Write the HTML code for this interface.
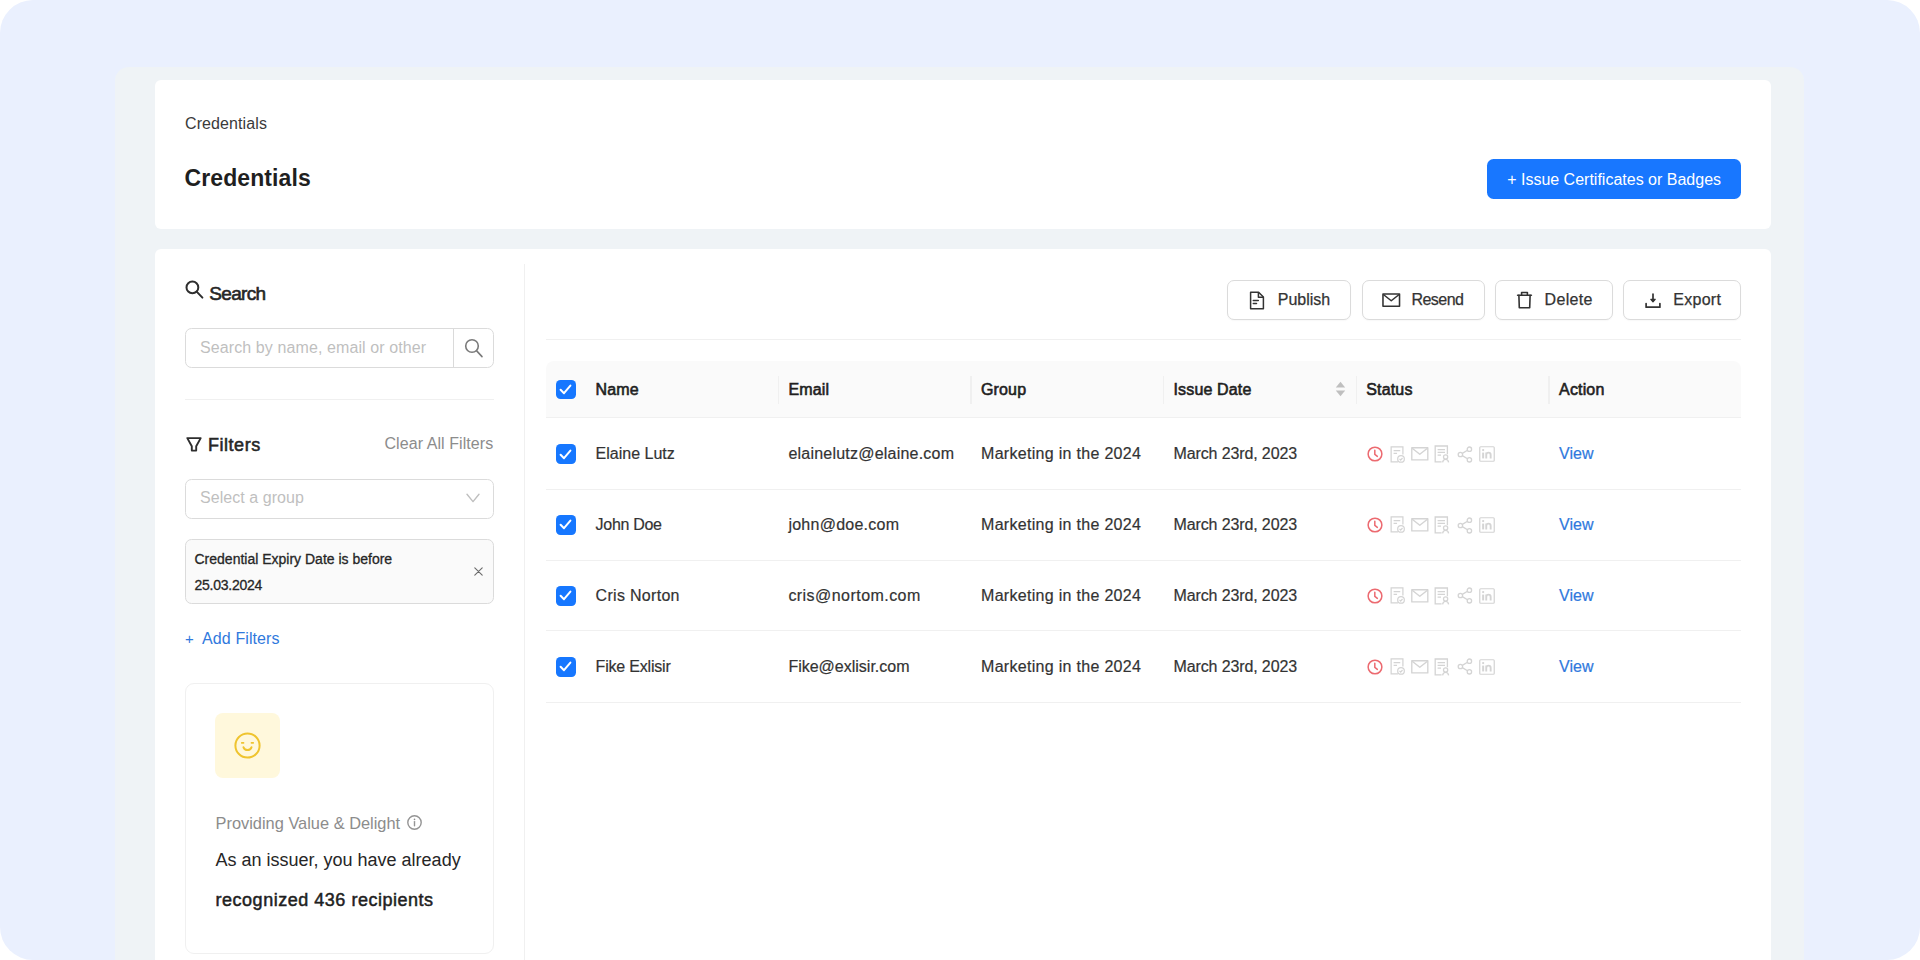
<!DOCTYPE html>
<html lang="en">
<head>
<meta charset="utf-8">
<title>Credentials</title>
<style>
*{box-sizing:border-box;margin:0;padding:0}
html,body{width:1920px;height:960px;overflow:hidden;background:#fff}
body{font-family:"Liberation Sans",Arial,sans-serif;font-size:16px;color:#262626;position:relative}
.abs{position:absolute}
.stage{position:absolute;left:0;top:0;width:1920px;height:960px;background:#eaf0fe;border-radius:33px;overflow:hidden}
.panel{position:absolute;left:115.300px;top:66.5px;width:1688.500px;height:920px;background:#eff3f6;border-radius:14px}
.card{position:absolute;background:#fff;border-radius:6px}
.t{position:absolute;white-space:nowrap;line-height:1}
.btn{position:absolute;top:31.600px;height:40.200px;border:1.3px solid #dbdbdb;border-radius:7px;background:#fff;box-shadow:0 1px 1.5px rgba(0,0,0,.03)}
.btn .t{top:11.2px;font-size:16px;color:#333;-webkit-text-stroke:0.25px #333}
.th{position:absolute;top:0;height:57.8px}
.th .t{top:21.300px;font-size:16px;color:#1f1f1f;-webkit-text-stroke:0.6px #1f1f1f;letter-spacing:0.15px}
.sep{position:absolute;top:15.5px;width:1.3px;height:28px;background:#f0f0f0}
.row{position:absolute;left:391.5px;width:1195px;height:70.7px;border-bottom:1.3px solid #f0f0f0}
.row .t{top:26.900px;font-size:16px;color:#333;-webkit-text-stroke:0.2px #333}
.row a.t{-webkit-text-stroke:0.2px #3079dd}
.cb{position:absolute;left:9.700px;width:19.900px;height:19.900px;border-radius:4.5px;background:#1677ff}
.cb svg{left:3.600px;top:4.400px}
.row a.t{color:#3079dd;text-decoration:none}
.st{position:absolute;left:820.5px;top:26px;width:132px;height:18px}
svg{display:block;position:absolute;overflow:visible}
</style>
</head>
<body>
<div class="stage">
 <div class="panel"></div>

 <!-- page header card -->
 <div class="card" id="hdr" style="left:154.5px;top:80px;width:1616.400px;height:149.3px">
  <div class="t" id="crumb" style="left:30.5px;top:36px;font-size:16px;color:#3a3a3a;letter-spacing:0.1px">Credentials</div>
  <h1 class="t" id="title" style="left:30px;top:87.400px;font-size:23px;font-weight:700;color:#1f1f1f;letter-spacing:0.1px">Credentials</h1>
  <div class="abs" id="issue" style="left:1332.300px;top:78.800px;width:254.600px;height:40.100px;background:#1877ff;border-radius:6.5px;color:#fff;font-size:16px;line-height:42.300px;text-align:center;white-space:nowrap">+ Issue Certificates or Badges</div>
 </div>

 <!-- main card -->
 <div class="card" id="main" style="left:154.5px;top:248.5px;width:1616.400px;height:740px">
  <!-- ===== sidebar ===== -->
  <div class="abs" style="left:369.5px;top:15.5px;width:1.3px;height:730px;background:#f0f0f0"></div>

  <svg id="ic-search-h" style="left:30.100px;top:31.100px" width="19" height="19" viewBox="0 0 19 19" fill="none" stroke="#2e2e2e" stroke-width="2" stroke-linecap="round"><circle cx="7.4" cy="7.4" r="5.9"/><path d="M11.9 11.9 17.4 17.6"/></svg>
  <div class="t" id="search-h" style="left:54.800px;top:35px;font-size:19px;color:#262626;-webkit-text-stroke:0.6px #262626;letter-spacing:-0.700px">Search</div>

  <div class="abs" id="search-box" style="left:30.5px;top:79.5px;width:309px;height:40px;border:1.3px solid #dbdbdb;border-radius:6.5px;background:#fff">
    <div class="t" style="left:14px;top:10.5px;font-size:16px;color:#bfbfbf;letter-spacing:0.1px">Search by name, email or other</div>
    <div class="abs" style="left:267.200px;top:-0.500px;width:1.300px;height:38.500px;background:#dadada"></div>
    <svg style="left:278px;top:8.5px" width="20" height="20" viewBox="0 0 20 20" fill="none" stroke="#7a7a7a" stroke-width="1.600" stroke-linecap="round"><circle cx="8" cy="8" r="6.3"/><path d="M12.7 12.9 18 18.6"/></svg>
  </div>

  <div class="abs" style="left:30.5px;top:150.3px;width:309px;height:1.3px;background:#f0f0f0"></div>

  <svg id="ic-filter" style="left:31px;top:188px" width="16" height="15" viewBox="0 0 16 15" fill="none" stroke="#2e2e2e" stroke-width="1.900" stroke-linejoin="round"><path d="M1.300 1.100h13.400L10.200 9.200v4.400H5.800V9.200z"/></svg>
  <div class="t" id="filters-h" style="left:53.400px;top:187.100px;font-size:18px;color:#262626;-webkit-text-stroke:0.55px #262626;letter-spacing:0.55px">Filters</div>
  <div class="t" id="clear" style="left:230px;top:187.700px;font-size:16px;color:#8c8c8c;letter-spacing:0.07px">Clear All Filters</div>

  <div class="abs" id="select" style="left:30.5px;top:230.3px;width:309px;height:40px;border:1.3px solid #dbdbdb;border-radius:6.5px;background:#fff">
    <div class="t" style="left:14px;top:10.5px;font-size:16px;color:#bfbfbf;letter-spacing:0.05px">Select a group</div>
    <svg style="left:279.600px;top:13.600px" width="14" height="10" viewBox="0 0 14 10" fill="none" stroke="#bfbfbf" stroke-width="1.4" stroke-linecap="round" stroke-linejoin="round"><path d="M1 1.2 7 8.6 13 1.2"/></svg>
  </div>

  <div class="abs" id="chip" style="left:30.5px;top:290.7px;width:309px;height:65px;border:1.3px solid #dbdbdb;border-radius:6.5px;background:#fafafa">
    <div class="t" style="left:8.5px;top:12px;font-size:14px;color:#262626;-webkit-text-stroke:0.3px #262626">Credential Expiry Date is before</div>
    <div class="t" style="left:8.5px;top:37.5px;font-size:14px;color:#262626;-webkit-text-stroke:0.3px #262626;letter-spacing:-0.25px">25.03.2024</div>
    <svg style="left:287.5px;top:27px" width="9" height="9" viewBox="0 0 9 9" fill="none" stroke="#6a6a6a" stroke-width="1.100" stroke-linecap="round"><path d="M.8.8 8.2 8.2M8.2.8.8 8.2"/></svg>
  </div>

  <div class="t" id="addf" style="left:30.500px;top:382.500px;font-size:16px;color:#3079dd;letter-spacing:0.1px"><span style="font-size:15px">+</span>&nbsp; Add Filters</div>

  <div class="abs" id="stat" style="left:30.5px;top:434.8px;width:309px;height:270.5px;border:1.3px solid #f0f0f0;border-radius:9px;background:#fff">
    <div class="abs" style="left:29px;top:28.5px;width:64.500px;height:65px;border-radius:8px;background:#fff8dc"></div>
    <svg style="left:47.500px;top:47.900px" width="27" height="27" viewBox="0 0 27 27" fill="none" stroke="#efc42f" stroke-width="2" stroke-linecap="round"><circle cx="13.5" cy="13.5" r="12.100"/><path d="M9.500 15.300a4.300 4.300 0 0 0 8 0"/><path d="M7.700 10.900h1.900M17.400 10.900h1.900" stroke-width="1.600"/></svg>
    <div class="t" style="left:29.500px;top:130.600px;font-size:16.4px;color:#8c8c8c">Providing Value &amp; Delight</div>
    <svg style="left:221px;top:131px" width="15" height="15" viewBox="0 0 15 15" fill="none" stroke="#949494" stroke-width="1.400"><circle cx="7.5" cy="7.5" r="6.7"/><path d="M7.5 6.6v4.2" stroke-linecap="round"/><circle cx="7.5" cy="4.4" r=".8" fill="#8c8c8c" stroke="none"/></svg>
    <div class="t" style="left:29.500px;top:166.300px;font-size:18px;color:#262626">As an issuer, you have already</div>
    <div class="t" style="left:29.500px;top:207.200px;font-size:18px;color:#1f1f1f;-webkit-text-stroke:0.5px #1f1f1f;letter-spacing:0.52px">recognized 436 recipients</div>
  </div>

  <!-- ===== content ===== -->
  
  <div class="btn" id="b-pub" style="left:1072.900px;width:123.400px">
    <svg style="left:20.800px;top:9.500px" width="16" height="19" viewBox="0 0 16 19" fill="none" stroke="#333" stroke-width="1.5" stroke-linejoin="round"><path d="M1.6 1.2h8l4.8 4.8v11.8H1.6z"/><path d="M9.4 1.4v4.8h4.8"/><path d="M4.3 9.6h5M4.3 12.6h3.2" stroke-linecap="round"/></svg>
    <div class="t" style="left:49.4px">Publish</div>
  </div>
  <div class="btn" id="b-res" style="left:1207px;width:123px">
    <svg style="left:19.500px;top:11.800px" width="18.500" height="14.200" viewBox="0 0 19 15" preserveAspectRatio="none" fill="none" stroke="#333" stroke-width="1.6" stroke-linejoin="round"><rect x="1" y="1" width="17" height="13"/><path d="M1.4 1.6 9.5 8.2 17.6 1.6"/></svg>
    <div class="t" style="left:49.0px;letter-spacing:-0.55px">Resend</div>
  </div>
  <div class="btn" id="b-del" style="left:1340.3px;width:117.9px">
    <svg style="left:20.2px;top:10.3px" width="17" height="18" viewBox="0 0 17 18" fill="none" stroke="#333" stroke-width="1.6" stroke-linejoin="round" stroke-linecap="round"><path d="M1.600 4.200h13.800"/><path d="M5.600 4V1.500h5.800V4"/><path d="M2.900 4.400 3.300 16.800h10.400L14.100 4.400"/></svg>
    <div class="t" style="left:48.7px;letter-spacing:0.35px">Delete</div>
  </div>
  <div class="btn" id="b-exp" style="left:1468.6px;width:117.7px">
    <svg style="left:20.600px;top:11.600px" width="16" height="15.500" viewBox="0 0 16 15.5" fill="none" stroke="#333" stroke-width="1.700" stroke-linecap="round" stroke-linejoin="round"><path d="M8 1v6.800"/><path d="M5.800 6.300 8 8.800l2.200-2.500z" fill="#333" stroke-width="1.200"/><path d="M1.100 10.600v3.600h13.800v-3.600"/></svg>
    <div class="t" style="left:49.1px;letter-spacing:0.3px">Export</div>
  </div>
  <div class="abs" style="left:391.5px;top:90.7px;width:1195px;height:1.3px;background:#f0f0f0"></div>
  <div class="abs" id="thead" style="left:391.5px;top:112.1px;width:1195px;height:57.8px;background:#fafafa;border-radius:8px 8px 0 0;border-bottom:1.3px solid #f0f0f0">
    <div class="cb" style="top:19px"><svg width="13" height="11" viewBox="0 0 13 11" fill="none" stroke="#fff" stroke-width="2" stroke-linecap="round" stroke-linejoin="round"><path d="M1.600 5.800 5 9.200 11.400 1.600"/></svg></div>
    <div class="t" style="left:49.6px;top:21.300px;font-size:16px;color:#1f1f1f;-webkit-text-stroke:0.6px #1f1f1f;letter-spacing:0.15px">Name</div>
    <div class="t" style="left:242.4px;top:21.300px;font-size:16px;color:#1f1f1f;-webkit-text-stroke:0.6px #1f1f1f;letter-spacing:0.15px">Email</div>
    <div class="t" style="left:435px;top:21.300px;font-size:16px;color:#1f1f1f;-webkit-text-stroke:0.6px #1f1f1f;letter-spacing:0.15px">Group</div>
    <div class="t" style="left:627.5px;top:21.300px;font-size:16px;color:#1f1f1f;-webkit-text-stroke:0.6px #1f1f1f;letter-spacing:0.15px">Issue Date</div>
    <div class="t" style="left:820.3px;top:21.300px;font-size:16px;color:#1f1f1f;-webkit-text-stroke:0.6px #1f1f1f;letter-spacing:0.15px">Status</div>
    <div class="t" style="left:1013.1px;top:21.300px;font-size:16px;color:#1f1f1f;-webkit-text-stroke:0.6px #1f1f1f;letter-spacing:0.15px">Action</div>
    <div class="sep" style="left:231.8px"></div>
    <div class="sep" style="left:424.4px"></div>
    <div class="sep" style="left:617.0px"></div>
    <div class="sep" style="left:809.6px"></div>
    <div class="sep" style="left:1002.3px"></div>
    <svg style="left:789.300px;top:20.700px" width="11" height="16" viewBox="0 0 10 15"><path d="M5 0.6 9.4 6H.6z" fill="#bfbfbf"/><path d="M5 14.4.6 9h8.8z" fill="#bfbfbf"/></svg>
  </div>
  <div class="row" style="top:170.9px">
    <div class="cb" style="top:25px"><svg width="13" height="11" viewBox="0 0 13 11" fill="none" stroke="#fff" stroke-width="2" stroke-linecap="round" stroke-linejoin="round"><path d="M1.600 5.800 5 9.200 11.400 1.600"/></svg></div>
    <div class="t" style="left:49.6px;letter-spacing:0.0px">Elaine Lutz</div>
    <div class="t" style="left:242.4px;letter-spacing:0.22px">elainelutz@elaine.com</div>
    <div class="t" style="left:435px;letter-spacing:0.3px">Marketing in the 2024</div>
    <div class="t" style="left:627.5px;letter-spacing:-0.12px">March 23rd, 2023</div>
    <div class="st">
      <svg style="left:0.300px;top:0.800px" width="16" height="16" viewBox="0 0 17 17" fill="none" stroke="#ec6a70" stroke-width="1.600" stroke-linecap="round"><circle cx="8.5" cy="8.5" r="7.3"/><path d="M8.3 4.4v4.4l2.7 2.2"/></svg>
      <svg style="left:23px;top:0.300px" width="15.200" height="17.100" viewBox="0 0 16 18" fill="none" stroke="#d4d4d4" stroke-width="1.3"><path d="M8.4 16.8H1.2V1h12.4v8"/><path d="M3.8 4.8h7M3.8 7.8h3.6"/><circle cx="11.6" cy="13.6" r="3.5"/><path d="M10 13.6l1.2 1.2 2-2.2"/></svg>
      <svg style="left:44.500px;top:2px" width="17.600" height="13.800" viewBox="0 0 18 15" preserveAspectRatio="none" fill="none" stroke="#d4d4d4" stroke-width="1.4" stroke-linejoin="round"><rect x=".8" y=".8" width="16.4" height="13.2"/><path d="M1.2 1.4 9 8 16.8 1.4"/></svg>
      <svg style="left:67.5px;top:0" width="16" height="18" viewBox="0 0 16 18" fill="none" stroke="#d4d4d4" stroke-width="1.3"><path d="M7.6 16.8H1.2V1h12.2v8.2"/><path d="M3.6 4.6h7.4M3.6 7.4h7.4M3.6 10.2h3.4"/><circle cx="11.6" cy="12" r="2.1"/><path d="M8.6 17.4c.3-2 1.4-3 3-3s2.700 1 3 3"/></svg>
      <svg style="left:90.6px;top:0.6px" width="16" height="17" viewBox="0 0 16 17" fill="none" stroke="#d4d4d4" stroke-width="1.3"><circle cx="12.4" cy="3.2" r="2.2"/><circle cx="3.4" cy="8.5" r="2.2"/><circle cx="12.4" cy="13.8" r="2.2"/><path d="M5.300 7.400 10.500 4.300M5.300 9.600 10.500 12.700"/></svg>
      <svg style="left:112.600px;top:1px" width="16" height="16" viewBox="0 0 17 17" fill="none" stroke="#d4d4d4" stroke-width="1.3"><rect x=".8" y=".8" width="15.4" height="15.400" rx="1"/><path d="M4.400 7v6.200" stroke-width="2.100"/><circle cx="4.400" cy="4.300" r="1.200" fill="#d4d4d4" stroke="none"/><path d="M7.700 13.200V7M7.700 9.600c0-1.600 1-2.500 2.400-2.500s2.300.9 2.300 2.500v3.600" stroke-width="2"/></svg>
    </div>
    <a class="t" style="left:1013.1px">View</a>
  </div>
  <div class="row" style="top:241.6px">
    <div class="cb" style="top:25px"><svg width="13" height="11" viewBox="0 0 13 11" fill="none" stroke="#fff" stroke-width="2" stroke-linecap="round" stroke-linejoin="round"><path d="M1.600 5.800 5 9.200 11.400 1.600"/></svg></div>
    <div class="t" style="left:49.6px;letter-spacing:-0.3px">John Doe</div>
    <div class="t" style="left:242.4px;letter-spacing:0.25px">john@doe.com</div>
    <div class="t" style="left:435px;letter-spacing:0.3px">Marketing in the 2024</div>
    <div class="t" style="left:627.5px;letter-spacing:-0.12px">March 23rd, 2023</div>
    <div class="st">
      <svg style="left:0.300px;top:0.800px" width="16" height="16" viewBox="0 0 17 17" fill="none" stroke="#ec6a70" stroke-width="1.600" stroke-linecap="round"><circle cx="8.5" cy="8.5" r="7.3"/><path d="M8.3 4.4v4.4l2.7 2.2"/></svg>
      <svg style="left:23px;top:0.300px" width="15.200" height="17.100" viewBox="0 0 16 18" fill="none" stroke="#d4d4d4" stroke-width="1.3"><path d="M8.4 16.8H1.2V1h12.4v8"/><path d="M3.8 4.8h7M3.8 7.8h3.6"/><circle cx="11.6" cy="13.6" r="3.5"/><path d="M10 13.6l1.2 1.2 2-2.2"/></svg>
      <svg style="left:44.500px;top:2px" width="17.600" height="13.800" viewBox="0 0 18 15" preserveAspectRatio="none" fill="none" stroke="#d4d4d4" stroke-width="1.4" stroke-linejoin="round"><rect x=".8" y=".8" width="16.4" height="13.2"/><path d="M1.2 1.4 9 8 16.8 1.4"/></svg>
      <svg style="left:67.5px;top:0" width="16" height="18" viewBox="0 0 16 18" fill="none" stroke="#d4d4d4" stroke-width="1.3"><path d="M7.6 16.8H1.2V1h12.2v8.2"/><path d="M3.6 4.6h7.4M3.6 7.4h7.4M3.6 10.2h3.4"/><circle cx="11.6" cy="12" r="2.1"/><path d="M8.6 17.4c.3-2 1.4-3 3-3s2.700 1 3 3"/></svg>
      <svg style="left:90.6px;top:0.6px" width="16" height="17" viewBox="0 0 16 17" fill="none" stroke="#d4d4d4" stroke-width="1.3"><circle cx="12.4" cy="3.2" r="2.2"/><circle cx="3.4" cy="8.5" r="2.2"/><circle cx="12.4" cy="13.8" r="2.2"/><path d="M5.300 7.400 10.500 4.300M5.300 9.600 10.500 12.700"/></svg>
      <svg style="left:112.600px;top:1px" width="16" height="16" viewBox="0 0 17 17" fill="none" stroke="#d4d4d4" stroke-width="1.3"><rect x=".8" y=".8" width="15.4" height="15.400" rx="1"/><path d="M4.400 7v6.200" stroke-width="2.100"/><circle cx="4.400" cy="4.300" r="1.200" fill="#d4d4d4" stroke="none"/><path d="M7.700 13.200V7M7.700 9.600c0-1.600 1-2.500 2.400-2.500s2.300.9 2.300 2.500v3.600" stroke-width="2"/></svg>
    </div>
    <a class="t" style="left:1013.1px">View</a>
  </div>
  <div class="row" style="top:312.3px">
    <div class="cb" style="top:25px"><svg width="13" height="11" viewBox="0 0 13 11" fill="none" stroke="#fff" stroke-width="2" stroke-linecap="round" stroke-linejoin="round"><path d="M1.600 5.800 5 9.200 11.400 1.600"/></svg></div>
    <div class="t" style="left:49.6px;letter-spacing:0.3px">Cris Norton</div>
    <div class="t" style="left:242.4px;letter-spacing:0.45px">cris@nortom.com</div>
    <div class="t" style="left:435px;letter-spacing:0.3px">Marketing in the 2024</div>
    <div class="t" style="left:627.5px;letter-spacing:-0.12px">March 23rd, 2023</div>
    <div class="st">
      <svg style="left:0.300px;top:0.800px" width="16" height="16" viewBox="0 0 17 17" fill="none" stroke="#ec6a70" stroke-width="1.600" stroke-linecap="round"><circle cx="8.5" cy="8.5" r="7.3"/><path d="M8.3 4.4v4.4l2.7 2.2"/></svg>
      <svg style="left:23px;top:0.300px" width="15.200" height="17.100" viewBox="0 0 16 18" fill="none" stroke="#d4d4d4" stroke-width="1.3"><path d="M8.4 16.8H1.2V1h12.4v8"/><path d="M3.8 4.8h7M3.8 7.8h3.6"/><circle cx="11.6" cy="13.6" r="3.5"/><path d="M10 13.6l1.2 1.2 2-2.2"/></svg>
      <svg style="left:44.500px;top:2px" width="17.600" height="13.800" viewBox="0 0 18 15" preserveAspectRatio="none" fill="none" stroke="#d4d4d4" stroke-width="1.4" stroke-linejoin="round"><rect x=".8" y=".8" width="16.4" height="13.2"/><path d="M1.2 1.4 9 8 16.8 1.4"/></svg>
      <svg style="left:67.5px;top:0" width="16" height="18" viewBox="0 0 16 18" fill="none" stroke="#d4d4d4" stroke-width="1.3"><path d="M7.6 16.8H1.2V1h12.2v8.2"/><path d="M3.6 4.6h7.4M3.6 7.4h7.4M3.6 10.2h3.4"/><circle cx="11.6" cy="12" r="2.1"/><path d="M8.6 17.4c.3-2 1.4-3 3-3s2.700 1 3 3"/></svg>
      <svg style="left:90.6px;top:0.6px" width="16" height="17" viewBox="0 0 16 17" fill="none" stroke="#d4d4d4" stroke-width="1.3"><circle cx="12.4" cy="3.2" r="2.2"/><circle cx="3.4" cy="8.5" r="2.2"/><circle cx="12.4" cy="13.8" r="2.2"/><path d="M5.300 7.400 10.500 4.300M5.300 9.600 10.500 12.700"/></svg>
      <svg style="left:112.600px;top:1px" width="16" height="16" viewBox="0 0 17 17" fill="none" stroke="#d4d4d4" stroke-width="1.3"><rect x=".8" y=".8" width="15.4" height="15.400" rx="1"/><path d="M4.400 7v6.200" stroke-width="2.100"/><circle cx="4.400" cy="4.300" r="1.200" fill="#d4d4d4" stroke="none"/><path d="M7.700 13.200V7M7.700 9.600c0-1.600 1-2.500 2.400-2.500s2.300.9 2.300 2.500v3.600" stroke-width="2"/></svg>
    </div>
    <a class="t" style="left:1013.1px">View</a>
  </div>
  <div class="row" style="top:383.400px">
    <div class="cb" style="top:25px"><svg width="13" height="11" viewBox="0 0 13 11" fill="none" stroke="#fff" stroke-width="2" stroke-linecap="round" stroke-linejoin="round"><path d="M1.600 5.800 5 9.200 11.400 1.600"/></svg></div>
    <div class="t" style="left:49.6px;letter-spacing:-0.2px">Fike Exlisir</div>
    <div class="t" style="left:242.4px;letter-spacing:0px">Fike@exlisir.com</div>
    <div class="t" style="left:435px;letter-spacing:0.3px">Marketing in the 2024</div>
    <div class="t" style="left:627.5px;letter-spacing:-0.12px">March 23rd, 2023</div>
    <div class="st">
      <svg style="left:0.300px;top:0.800px" width="16" height="16" viewBox="0 0 17 17" fill="none" stroke="#ec6a70" stroke-width="1.600" stroke-linecap="round"><circle cx="8.5" cy="8.5" r="7.3"/><path d="M8.3 4.4v4.4l2.7 2.2"/></svg>
      <svg style="left:23px;top:0.300px" width="15.200" height="17.100" viewBox="0 0 16 18" fill="none" stroke="#d4d4d4" stroke-width="1.3"><path d="M8.4 16.8H1.2V1h12.4v8"/><path d="M3.8 4.8h7M3.8 7.8h3.6"/><circle cx="11.6" cy="13.6" r="3.5"/><path d="M10 13.6l1.2 1.2 2-2.2"/></svg>
      <svg style="left:44.500px;top:2px" width="17.600" height="13.800" viewBox="0 0 18 15" preserveAspectRatio="none" fill="none" stroke="#d4d4d4" stroke-width="1.4" stroke-linejoin="round"><rect x=".8" y=".8" width="16.4" height="13.2"/><path d="M1.2 1.4 9 8 16.8 1.4"/></svg>
      <svg style="left:67.5px;top:0" width="16" height="18" viewBox="0 0 16 18" fill="none" stroke="#d4d4d4" stroke-width="1.3"><path d="M7.6 16.8H1.2V1h12.2v8.2"/><path d="M3.6 4.6h7.4M3.6 7.4h7.4M3.6 10.2h3.4"/><circle cx="11.6" cy="12" r="2.1"/><path d="M8.6 17.4c.3-2 1.4-3 3-3s2.700 1 3 3"/></svg>
      <svg style="left:90.6px;top:0.6px" width="16" height="17" viewBox="0 0 16 17" fill="none" stroke="#d4d4d4" stroke-width="1.3"><circle cx="12.4" cy="3.2" r="2.2"/><circle cx="3.4" cy="8.5" r="2.2"/><circle cx="12.4" cy="13.8" r="2.2"/><path d="M5.300 7.400 10.500 4.300M5.300 9.600 10.500 12.700"/></svg>
      <svg style="left:112.600px;top:1px" width="16" height="16" viewBox="0 0 17 17" fill="none" stroke="#d4d4d4" stroke-width="1.3"><rect x=".8" y=".8" width="15.4" height="15.400" rx="1"/><path d="M4.400 7v6.200" stroke-width="2.100"/><circle cx="4.400" cy="4.300" r="1.200" fill="#d4d4d4" stroke="none"/><path d="M7.700 13.200V7M7.700 9.600c0-1.600 1-2.500 2.400-2.500s2.300.9 2.300 2.500v3.600" stroke-width="2"/></svg>
    </div>
    <a class="t" style="left:1013.1px">View</a>
  </div>

 </div>
</div>
</body>
</html>
